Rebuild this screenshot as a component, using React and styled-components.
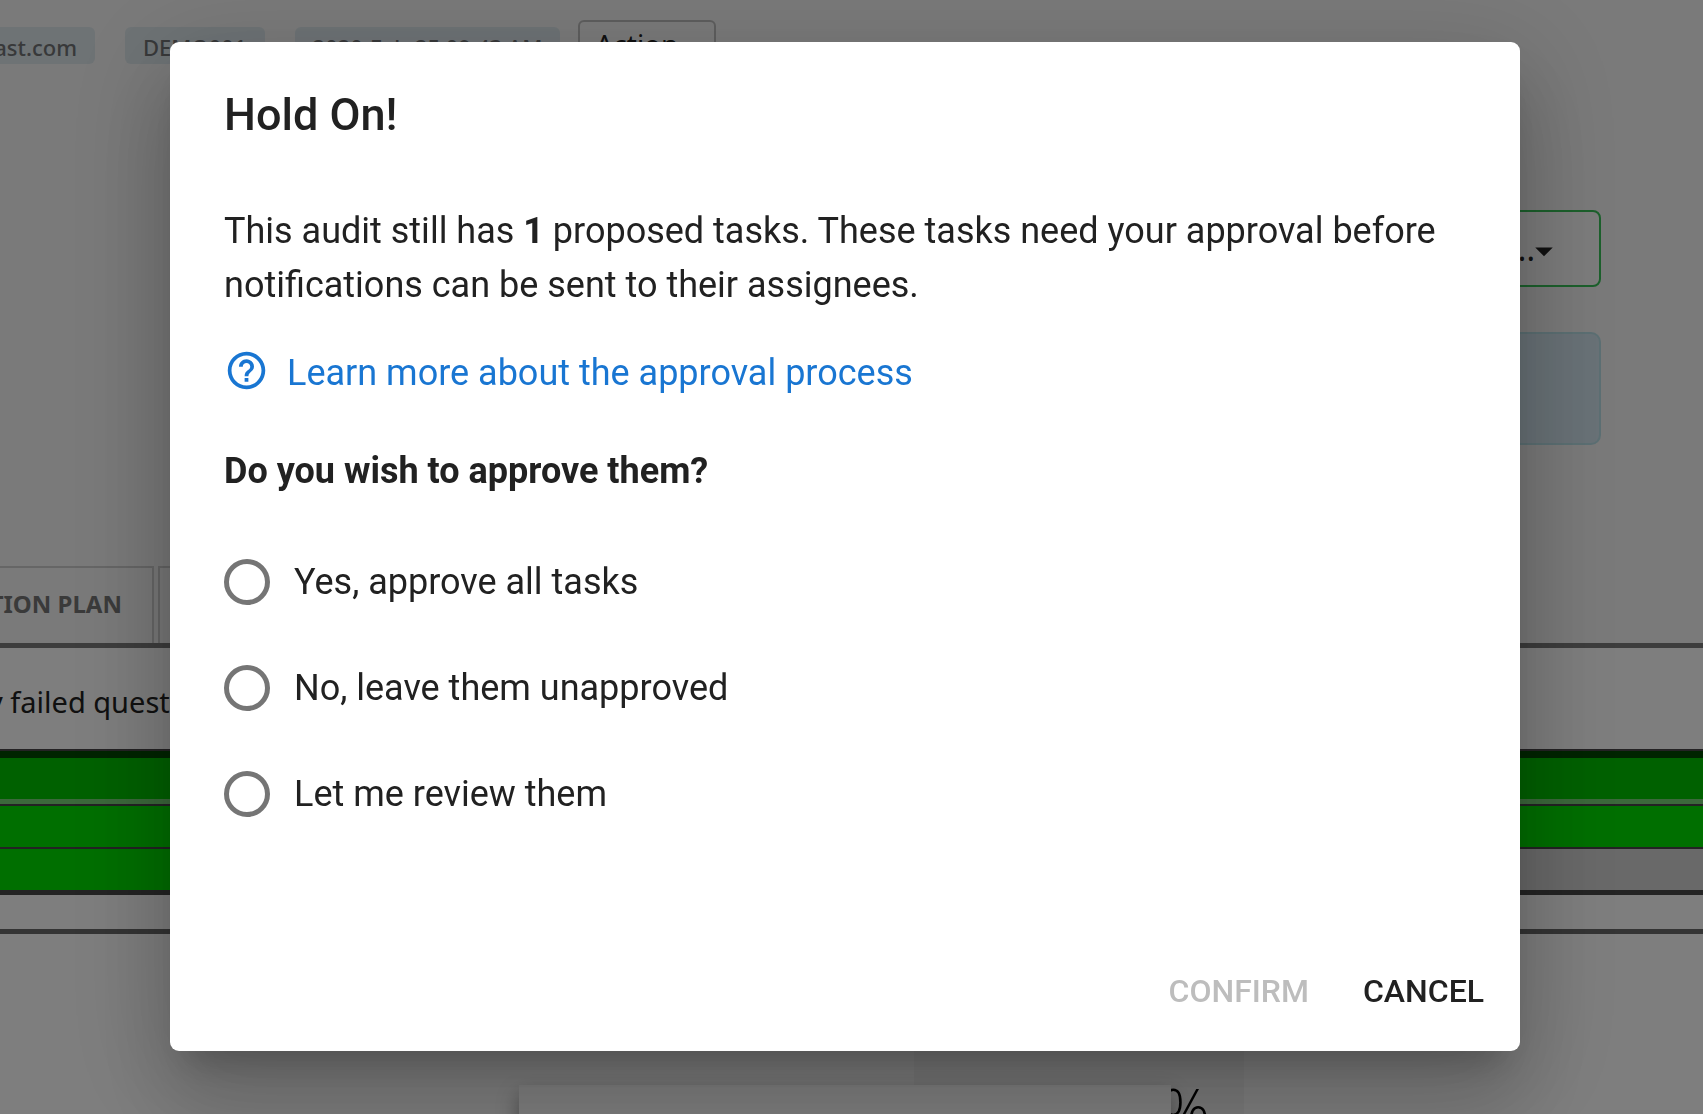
import React, { useState } from 'react'
import styled, { createGlobalStyle } from 'styled-components'
import { MdHelpOutline, MdArrowDropDown } from 'react-icons/md'

const GlobalStyle = createGlobalStyle`
  * { box-sizing: border-box; }
  body {
    margin: 0;
    background: #fcfcfc;
    color: #212121;
    font-family: "Noto Sans", "Open Sans", sans-serif;
    overflow: hidden;
  }
`

const Page = styled.div`
  height: 100vh;
  display: flex;
  flex-direction: column;
  overflow: hidden;
  > * { flex-shrink: 0; }
`

const TopSection = styled.div`
  background: #f4f4f4;
  display: flex;
  flex-direction: column;
`

const ChipBar = styled.div`
  display: flex;
  align-items: flex-start;
  gap: 30px;
  height: 70px;
  padding-top: 20px;
`

const Chip = styled.span`
  display: flex;
  justify-content: flex-end;
  width: ${props => (props.$cut ? '95px' : 'auto')};
  height: 37px;
  margin-top: 7px;
  padding: 0 18px;
  border-radius: ${props => (props.$cut ? '0 6px 6px 0' : '6px')};
  background: #dce6eb;
  color: #707274;
  font-size: 22px;
  font-weight: 500;
  line-height: 40px;
  white-space: nowrap;
`

const ActionSelect = styled.select`
  appearance: none;
  width: 138px;
  height: 48px;
  margin-left: -12px;
  padding: 0 15px;
  border: 2px solid #bdbdbd;
  border-radius: 6px;
  background: #f4f4f4;
  color: #212121;
  font: 28px "Noto Sans", sans-serif;
`

const SideFields = styled.div`
  display: flex;
  flex-direction: column;
  align-items: flex-end;
  gap: 45px;
  padding: 140px 102px 121px 0;
`

const StatusButton = styled.button`
  display: flex;
  align-items: center;
  justify-content: flex-end;
  width: 400px;
  height: 77px;
  padding: 0 34px 0 0;
  border: 2px solid #38c058;
  border-radius: 8px;
  background: #f8f8f8;
  color: #212121;
  font: 32px "Noto Sans", sans-serif;
  svg { width: 42px; height: 42px; margin: 4px 0 0 -12px; }
`

const InfoPanel = styled.div`
  width: 400px;
  height: 113px;
  border: 2px solid #b8dfe6;
  border-radius: 10px;
  background: #d2e4ee;
`

const Tabs = styled.div`
  display: flex;
  gap: 4px;
  height: 82px;
  border-bottom: 5px solid #7a7a7a;
`

const Tab = styled.button`
  display: flex;
  align-items: center;
  justify-content: flex-end;
  width: ${props => props.$width};
  padding: 0 30px 4px 0;
  border: 2px solid #cccccc;
  border-bottom: 0;
  border-left-width: ${props => (props.$cut ? '0' : '2px')};
  background: #f4f4f4;
  color: #757575;
  font: bold 24px "Noto Sans", sans-serif;
  white-space: nowrap;
`

const Notice = styled.div`
  height: 101px;
  margin-left: -12px;
  padding-top: 33px;
  font-size: 29px;
  line-height: 42px;
  white-space: nowrap;
`

const Bars = styled.div`
  border-top: 2px solid #484448;
  border-bottom: 5px solid #484848;
`

const Bar = styled.div`
  height: 41px;
  width: ${props => props.$width || '100%'};
  background: ${props => props.$color};
`

const BarRow = styled.div`
  background: #d2d2d2;
  border-top: ${props => (props.$first ? '7px solid #004800' : '2px solid #484448')};
  border-bottom: ${props => (props.$first ? '5px solid #78d078' : '0')};
`

const Spacer = styled.div`
  height: 39px;
  border-bottom: 5px solid #686868;
`

const Summary = styled.div`
  flex: 1;
  display: flex;
  padding-left: 519px;
`

const ScoreColumn = styled.div`
  width: 330px;
  margin-left: -257px;
  padding: 136px 34px 0 0;
  background: #f4f4f4;
  color: #000;
  font: 300 60px/80px "Open Sans", sans-serif;
  text-align: right;
`

const SummaryCard = styled.div`
  position: relative;
  z-index: 1;
  width: 652px;
  margin-top: 151px;
  background: #fff;
  box-shadow: 0 10px 20px rgba(0, 0, 0, .4);
`

const Backdrop = styled.div`
  position: fixed;
  inset: 0;
  z-index: 2;
  display: flex;
  align-items: flex-start;
  padding: 42px 183px 63px 170px;
  background: rgba(0, 0, 0, .5);
`

const Dialog = styled.div`
  flex: 1;
  border-radius: 9px;
  background: #fff;
  color: #212121;
  font-family: Roboto, sans-serif;
  box-shadow: 0 25px 34px -16px rgba(0, 0, 0, .2),
    0 54px 86px 7px rgba(0, 0, 0, .14),
    0 20px 104px 18px rgba(0, 0, 0, .12);
`

const Title = styled.h2`
  margin: 0;
  padding: 37px 54px 36px;
  font-size: 45px;
  font-weight: 500;
  line-height: 72px;
`

const Content = styled.div`
  padding: 17px 54px 113px;
  font-size: 36px;
  line-height: 54px;
`

const Text = styled.p`
  margin: 0;
`

const HelpLink = styled.a`
  display: flex;
  align-items: flex-start;
  gap: 18px;
  margin: 34px 0 44px;
  color: #1976d2;
  text-decoration: none;
  svg { width: 45px; height: 45px; margin-top: 2px; }
`

const Options = styled.fieldset`
  display: flex;
  flex-direction: column;
  gap: 52px;
  margin: 0;
  padding: 0;
  border: 0;
`

const Question = styled.legend`
  margin-bottom: 57px;
  padding: 0;
  font-weight: 700;
`

const Option = styled.label`
  display: flex;
  align-items: center;
  gap: 24px;
`

const Radio = styled.input`
  appearance: none;
  display: grid;
  place-items: center;
  width: 46px;
  height: 46px;
  margin: 0;
  border: 5px solid #757575;
  border-radius: 50%;
  &:checked::before {
    content: "";
    width: 22px;
    height: 22px;
    border-radius: 50%;
    background: #1976d2;
  }
`

const Actions = styled.div`
  display: flex;
  justify-content: flex-end;
  gap: 18px;
  padding: 18px;
`

const DialogButton = styled.button`
  height: 81px;
  padding: 0 18px 4px;
  border: 0;
  background: none;
  color: #212121;
  font: 500 32px Roboto, sans-serif;
  text-transform: uppercase;
  &:disabled { color: #bdbdbd; }
`

const options = [
  'Yes, approve all tasks',
  'No, leave them unapproved',
  'Let me review them',
]

function AuditPage() {
  return (
    <Page>
      <TopSection>
        <ChipBar>
          <Chip $cut>ast.com</Chip>
          <Chip>DEMO001</Chip>
          <Chip>2020-Feb-25 09:43 AM</Chip>
          <ActionSelect aria-label="Action">
            <option>Action</option>
          </ActionSelect>
        </ChipBar>
        <SideFields>
          <StatusButton>...<MdArrowDropDown /></StatusButton>
          <InfoPanel />
        </SideFields>
        <Tabs>
          <Tab $cut $width="154px">TION PLAN</Tab>
          <Tab $width="200px" aria-label="Next tab" />
        </Tabs>
      </TopSection>
      <Notice>y failed questions</Notice>
      <Bars>
        <BarRow $first><Bar $color="#00c200" /></BarRow>
        <BarRow><Bar $color="#00de00" /></BarRow>
        <BarRow><Bar $width="50%" $color="#00de00" /></BarRow>
      </Bars>
      <Spacer />
      <Summary>
        <SummaryCard />
        <ScoreColumn>0%</ScoreColumn>
      </Summary>
    </Page>
  )
}

export default function App() {
  const [choice, setChoice] = useState('')

  return (
    <>
      <GlobalStyle />
      <AuditPage />
      <Backdrop>
        <Dialog role="dialog" aria-modal="true" aria-labelledby="dialog-title">
          <Title id="dialog-title">Hold On!</Title>
          <Content>
            <Text>
              This audit still has <b>1</b> proposed tasks. These tasks need your
              approval before notifications can be sent to their assignees.
            </Text>
            <HelpLink href="#approval">
              <MdHelpOutline />
              Learn more about the approval process
            </HelpLink>
            <Options>
              <Question>Do you wish to approve them?</Question>
              {options.map(option => (
                <Option key={option}>
                  <Radio
                    type="radio"
                    name="approve"
                    checked={choice === option}
                    onChange={() => setChoice(option)}
                  />
                  {option}
                </Option>
              ))}
            </Options>
          </Content>
          <Actions>
            <DialogButton disabled={!choice}>Confirm</DialogButton>
            <DialogButton>Cancel</DialogButton>
          </Actions>
        </Dialog>
      </Backdrop>
    </>
  )
}
